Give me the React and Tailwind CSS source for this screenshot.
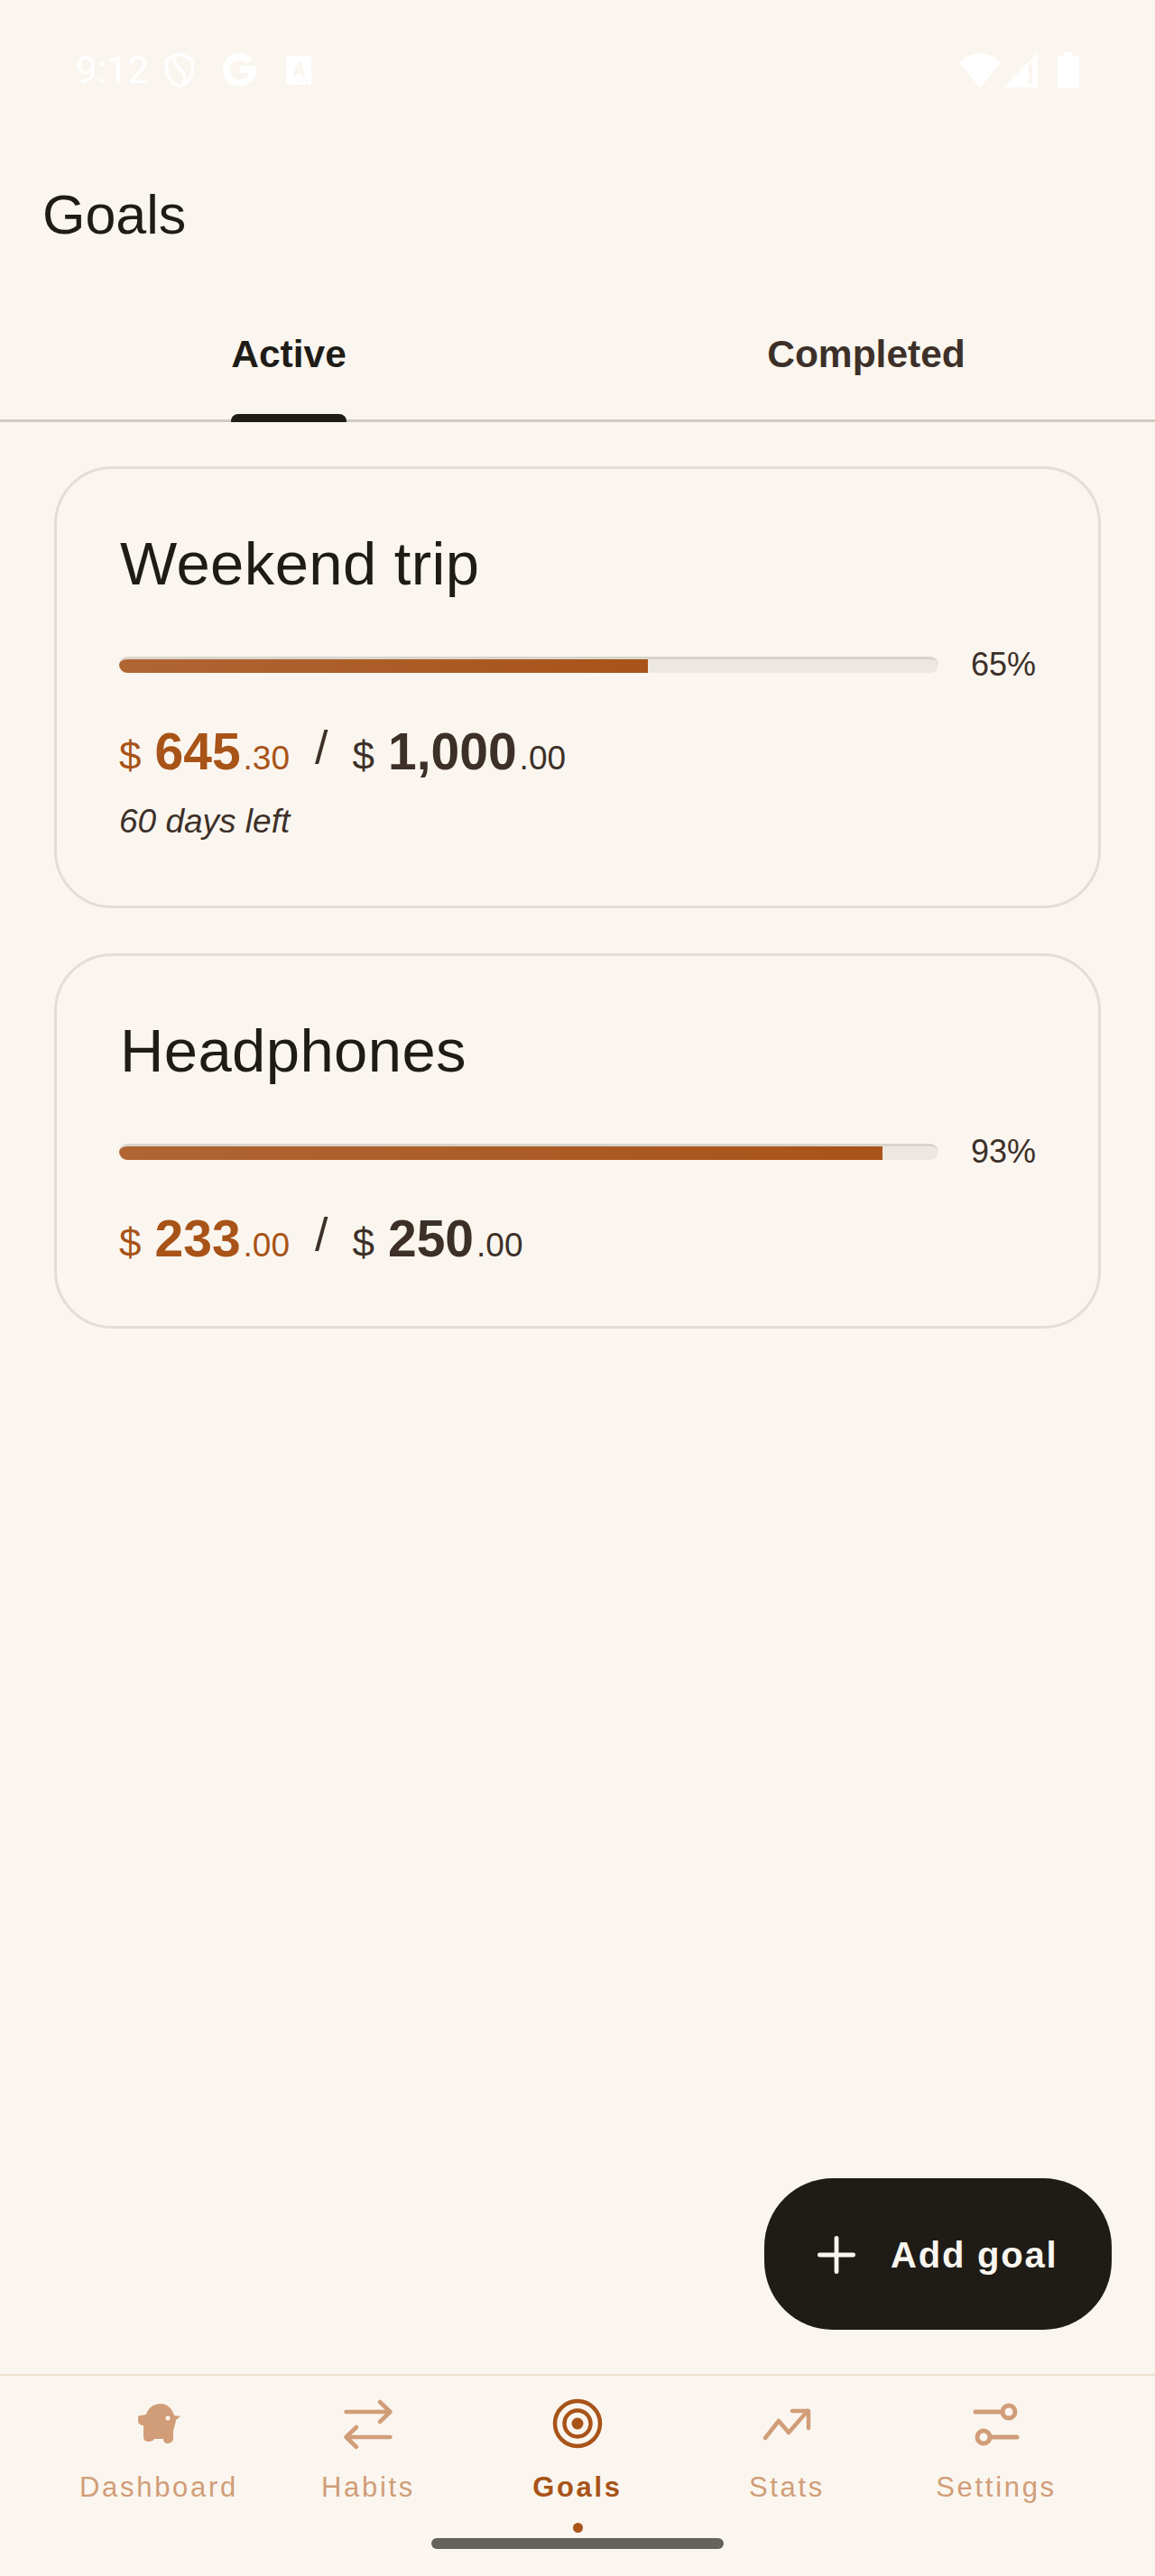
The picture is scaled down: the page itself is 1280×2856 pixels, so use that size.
import React from 'react';
import { Plus } from 'lucide-react';

const GOALS = [
  { title: 'Weekend trip', percent: 65, fill: 'w-[64.5%]', saved: '645', savedCents: '.30', target: '1,000', targetCents: '.00', note: '60 days left' },
  { title: 'Headphones', percent: 93, fill: 'w-[93.2%]', saved: '233', savedCents: '.00', target: '250', targetCents: '.00' },
];

const PigIcon = () => (
  <svg width="47" height="44" viewBox="0 0 47 44" fill="currentColor">
    <path d="M0 15Q0 13 3 13L9 12C11 4 18 0 25 0C33 0 38 6 40 13L47 14L42 18C41 25 39 28 39 32V38C39 41 37 44 33 44C30 44 28 42 28 39H18C17 41 15 42 12 42C8 42 6 40 6 37V24C3 24 0 22 0 19Z" />
    <circle cx="33" cy="16" r="2.5" fill="#faf6ef" />
  </svg>
);

const HabitsIcon = () => (
  <svg width="60" height="60" viewBox="0 0 60 60" fill="none" stroke="currentColor" strokeWidth="4.5" strokeLinecap="round" strokeLinejoin="round">
    <path d="M5.500 17H54.500M43 6 54.500 17 43 28" />
    <path d="M54.500 45H5.500M17 34 5.500 45 17 56" />
  </svg>
);

const GoalsIcon = () => (
  <svg width="60" height="60" viewBox="0 0 60 60" fill="none" stroke="currentColor" strokeWidth="4.5">
    <circle cx="30" cy="30" r="25" />
    <circle cx="30" cy="30" r="14.500" />
    <circle cx="30" cy="30" r="6.500" fill="currentColor" stroke="none" />
  </svg>
);

const StatsIcon = () => (
  <svg width="60" height="60" viewBox="0 0 60 60" fill="none" stroke="currentColor" strokeWidth="4.5" strokeLinecap="round" strokeLinejoin="round">
    <path d="M6 46 21 27 32 40 53 16" />
    <path d="M36 16H54V35" />
  </svg>
);

const SettingsIcon = () => (
  <svg width="60" height="60" viewBox="0 0 60 60" fill="none" stroke="currentColor" strokeWidth="5" strokeLinecap="round">
    <path d="M7 17H36" />
    <circle cx="44" cy="17" r="7" />
    <circle cx="16" cy="45" r="7" />
    <path d="M24 45H53" />
  </svg>
);

const NAV = [
  { label: 'Dashboard', icon: <PigIcon /> },
  { label: 'Habits', icon: <HabitsIcon /> },
  { label: 'Goals', icon: <GoalsIcon />, active: true },
  { label: 'Stats', icon: <StatsIcon /> },
  { label: 'Settings', icon: <SettingsIcon /> },
];

const Money = ({ value, cents, color }) => (
  <span className={`flex items-baseline ${color}`}>
    <span className="text-[44px] leading-none mr-[15px]">$</span>
    <span className="text-[57px] leading-none font-bold">{value}</span>
    <span className="ml-[3px] text-[37px] leading-none">{cents}</span>
  </span>
);

const GoalCard = ({ goal }) => (
  <div className="border-[3px] border-[#e2ddd5] rounded-[64px] pl-[69px] pr-[68px] pt-[65px] pb-[63px]">
    <h2 className="ml-[1px] text-[67px] leading-[80px] tracking-[0.4px] text-[#1f1c17]">{goal.title}</h2>
    <div className="flex items-center mt-[54px]">
      <div className="w-[908px] h-[18px] rounded-full overflow-hidden bg-[#ece8e1] border-t-[3px] border-[#d9d4cb]">
        <div className={`${goal.fill} h-[18px] -mt-[3px] bg-linear-to-r from-[#b06533] to-[#a85318] border-t-[3px] border-white/10`} />
      </div>
      <span className="ml-[36px] text-[36px] leading-none text-[#3d3029]">{goal.percent}%</span>
    </div>
    <div className="flex items-baseline mt-[50px] h-[62px]">
      <Money value={goal.saved} cents={goal.savedCents} color="text-[#a85318]" />
      <span className="ml-[28px] mr-[27px] text-[52px] leading-none text-[#3d3029] -translate-y-[6px]">/</span>
      <Money value={goal.target} cents={goal.targetCents} color="text-[#3d3029]" />
    </div>
    {goal.note && <p className="mt-[22px] mb-[8px] text-[37px] leading-[44px] italic text-[#3d3029]">{goal.note}</p>}
  </div>
);

export default function App() {
  return (
    <div className="relative w-[1280px] h-[2856px] bg-[#faf6ef] flex flex-col font-['Liberation_Sans',sans-serif]">
      {/* status bar */}
      <div className="h-[156px] shrink-0 flex items-center justify-between px-[84px] text-white">
        <div className="flex items-center">
          <span className="w-[98px] text-[42px] leading-none font-['Roboto',sans-serif]">9:12</span>
          <svg width="34" height="42" viewBox="0 0 36 42" fill="none" stroke="currentColor" strokeWidth="3.5">
            <path d="M18 2 3 8v12c0 9 6 17 15 20 9-3 15-11 15-20V8z" />
            <path d="M13 5c-3 6 0 10 5 14s8 8 5 17" />
          </svg>
          <svg className="ml-[30px]" width="38" height="40" viewBox="0 0 40 40" fill="none" stroke="currentColor" strokeWidth="8">
            <path d="M32 9a15.500 15.500 0 1 0 4 11v-1H21" />
          </svg>
          <svg className="ml-[33px]" width="28" height="32" viewBox="0 0 30 34">
            <rect width="30" height="34" rx="2" fill="white" />
            <path d="M8 25 14 7h3l6 18h-4l-1-4h-6l-1 4zm6-8h3l-1.500-5z" fill="#faf6ef" />
            <path d="M15 30h2M19 30h2M23 30h2" stroke="#faf6ef" strokeWidth="2" />
          </svg>
        </div>
        <div className="flex items-center">
          <svg width="46" height="38" viewBox="0 0 46 38" fill="white"><path d="M0 11C6 4 14 0 23 0s17 4 23 11L23 38z" /></svg>
          <svg className="ml-[3px]" width="38" height="38" viewBox="0 0 38 38"><path d="M38 0v38H0z" fill="white" /><path d="M28 13v21h4V9z" fill="#faf6ef" /></svg>
          <svg className="ml-[22px]" width="24" height="40" viewBox="0 0 24 40" fill="white"><path d="M7 0h9v4h6a2 2 0 0 1 2 2v32a2 2 0 0 1-2 2H2a2 2 0 0 1-2-2V6a2 2 0 0 1 2-2h5z" /></svg>
        </div>
      </div>

      {/* header */}
      <h1 className="mt-[48px] pl-[47px] text-[61px] leading-[68px] text-[#1f1c17]">Goals</h1>

      {/* tabs */}
      <div className="h-[196px] shrink-0 grid grid-cols-2 border-b-[3px] border-[#cfcac2]">
        {['Active', 'Completed'].map((tab, i) => (
          <div key={tab} className="flex justify-center">
            <div className={`relative h-[196px] pt-[98px] text-[42.500px] leading-[46px] font-bold ${i === 0 ? 'text-[#1f1c17]' : 'text-[#3d3029]'}`}>
              {tab}
              {i === 0 && <div className="absolute left-0 right-0 bottom-0 h-[9px] rounded-t-[8px] bg-[#1f1c17]" />}
            </div>
          </div>
        ))}
      </div>

      {/* goals list */}
      <div className="flex-1 px-[60px] pt-[49px] flex flex-col gap-[50px]">
        {GOALS.map((goal) => <GoalCard key={goal.title} goal={goal} />)}
      </div>

      <button className="absolute left-[847px] top-[2415px] w-[385px] h-[168px] rounded-[76px] bg-[#1f1c17] text-[#faf6ef] flex items-center pl-[48px] pt-[2px]">
        <Plus size={64} strokeWidth={1.800} />
        <span className="ml-[28px] text-[40px] font-bold tracking-[1.800px]">Add goal</span>
      </button>

      {/* bottom nav */}
      <div className="relative h-[224px] shrink-0 border-t-2 border-[#efdfcb] px-[60px] grid grid-cols-5">
        {NAV.map(({ label, icon, active }) => (
          <div key={label} className={`flex flex-col items-center pt-[23px] ${active ? 'text-[#a85318]' : 'text-[#d19d78]'}`}>
            <div className="h-[60px] flex items-center justify-center">{icon}</div>
            <span className={`mt-[19px] text-[31px] leading-[44px] tracking-[2.700px] ${active ? 'font-bold' : ''}`}>{label}</span>
            {active && <div className="mt-[17px] w-[11px] h-[11px] rounded-full bg-[#a85318]" />}
          </div>
        ))}
        <div className="absolute left-[478px] top-[180px] w-[324px] h-[12px] rounded-full bg-[#64625c]" />
      </div>
    </div>
  );
}
